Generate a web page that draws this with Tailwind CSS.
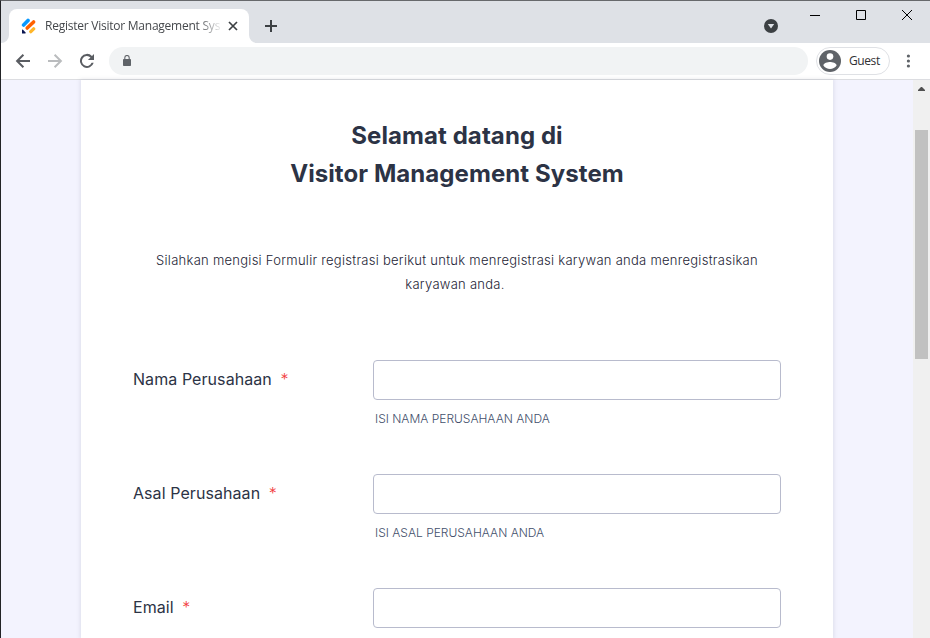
<!DOCTYPE html>
<html lang="id">
<head>
<meta charset="utf-8">
<title>Register Visitor Management System</title>
<script src="https://cdn.jsdelivr.net/npm/@tailwindcss/browser@4"></script>
</head>
<body class="h-[638px] w-[930px] overflow-hidden bg-white font-['Inter',sans-serif]">
<div class="flex h-full w-full flex-col border-t border-l border-t-[#67696c] border-l-[#222326]">
  <!-- Tab strip -->
  <header class="flex h-[42px] shrink-0 bg-[#dee1e6]">
    <div class="flex w-2 items-end">
      <svg class="h-2 w-2" viewBox="0 0 8 8"><path d="M8 0v8H0a8 8 0 0 0 8-8Z" fill="#fff"/></svg>
    </div>
    <div class="mt-2 flex h-[34px] w-[240px] items-center rounded-t-lg bg-white">
      <svg class="ml-3 h-4 w-4 shrink-0" viewBox="0 0 16 16" fill="none" stroke-linecap="round">
        <path d="M2.6 7 7 2.4" stroke="#0a99ff" stroke-width="3.6"/>
        <path d="M6.2 10 12.6 4" stroke="#ff6100" stroke-width="3.6"/>
        <path d="M9.8 13.6l2.8-2.7" stroke="#ffb629" stroke-width="3.4"/>
        <path d="M1 12.2v3.2h3.2c.6 0 .8-.5.4-.9L2 11.8c-.4-.4-1-.1-1 .4Z" fill="#0a1551"/>
      </svg>
      <div class="ml-2 w-[175px] overflow-hidden font-['Open_Sans',sans-serif] text-[12px] leading-4 tracking-[-0.24px] whitespace-nowrap text-[#45484c] [mask-image:linear-gradient(to_right,#000_152px,transparent_178px)]">Register Visitor Management System</div>
      <svg class="ml-2 h-[10px] w-[10px] shrink-0" viewBox="0 0 10 10" stroke="#3c4043" stroke-width="1.7"><path d="m1 1 8 8M9 1 1 9"/></svg>
    </div>
    <div class="flex w-2 items-end">
      <svg class="h-2 w-2" viewBox="0 0 8 8"><path d="M0 0v8h8a8 8 0 0 1-8-8Z" fill="#fff"/></svg>
    </div>
    <svg class="mt-[19px] ml-2 h-3 w-3" viewBox="0 0 12 12" stroke="#3c4043" stroke-width="2"><path d="M6 0v12M0 6h12"/></svg>
    <div class="ml-auto flex">
      <svg class="mt-[18px] h-[14px] w-[14px]" viewBox="0 0 14 14"><circle cx="7" cy="7" r="7" fill="#3c4043"/><path d="M3.8 5h6.4L7 9.5Z" fill="#dee1e6"/></svg>
      <svg class="mt-[14px] ml-8 h-[1px] w-[10px]" viewBox="0 0 10 1"><path d="M0 0h10v1H0Z"/></svg>
      <svg class="mt-[9px] ml-9 h-[10px] w-[10px]" viewBox="0 0 10 10" fill="none" stroke="#000"><path d="M.5.5h9v9h-9Z"/></svg>
      <svg class="mt-[9px] mr-[18px] ml-9 h-[10px] w-[10px]" viewBox="0 0 10 10" stroke="#000"><path d="m0 0 10 10M10 0 0 10"/></svg>
    </div>
  </header>
  <!-- Toolbar -->
  <div class="flex h-[37px] shrink-0 items-center border-b border-[#dcdde1] bg-white">
    <svg class="ml-[14px] h-4 w-4" viewBox="0 0 16 16" fill="none" stroke="#5a5d62" stroke-width="2"><path d="M15 8H2.5M8.4 1.7 2.1 8l6.3 6.3"/></svg>
    <svg class="ml-4 h-4 w-4" viewBox="0 0 16 16" fill="none" stroke="#babcbe" stroke-width="2"><path d="M1 8h12.5M7.6 1.7 13.9 8l-6.3 6.3"/></svg>
    <svg class="ml-4 h-4 w-4" viewBox="0 0 16 16"><path d="M13 3A7 7 0 1 0 14.7 9.8H12.6A5 5 0 1 1 11.5 4.5L8.9 7.1H15V1Z" fill="#5a5d62"/></svg>
    <div class="ml-[14px] flex h-7 w-[699px] items-center rounded-full bg-[#f1f3f4]">
      <svg class="mb-[1px] ml-[14px] h-[11px] w-2" viewBox="0 0 8 11"><rect y="4" width="8" height="7" rx=".8" fill="#5f6368"/><path d="M1.8 4.5V2.7a2.2 2.2 0 0 1 4.4 0v1.8" fill="none" stroke="#5f6368" stroke-width="1.1"/></svg>
    </div>
    <div class="ml-2 flex h-7 w-[74px] items-center rounded-full border border-[#dfe1e5]">
      <svg class="ml-[2px] h-[22px] w-[22px] shrink-0" viewBox="0 0 22 22"><circle cx="11" cy="11" r="11" fill="#5f6368"/><circle cx="11" cy="6.6" r="3.3" fill="#fff"/><path d="M4.4 15.4c0-2.2 4.4-3.4 6.6-3.4s6.6 1.2 6.6 3.4a7.9 7.9 0 0 1-13.2 0Z" fill="#fff"/></svg>
      <span class="ml-2 font-['Open_Sans',sans-serif] text-[12px] leading-4 tracking-[-0.4px] text-[#303134]">Guest</span>
    </div>
    <svg class="ml-4 h-[14px] w-1" viewBox="0 0 4 14" fill="#5f6368"><circle cx="2.4" cy="2" r="1.6"/><circle cx="2.4" cy="7" r="1.6"/><circle cx="2.4" cy="12" r="1.6"/></svg>
  </div>
  <!-- Page -->
  <div class="flex min-h-0 flex-1 bg-[#f3f3fe]">
    <main class="ml-20 w-[752px] bg-white px-[52px] shadow-[0_0_4px_1px_rgba(84,95,111,0.13)]">
      <h1 class="pt-[37px] text-center text-[24px] leading-[38px] font-bold tracking-[0.08px] text-[#2c3345]">Selamat datang di<br>Visitor Management System</h1>
      <p class="mt-[55px] text-center text-[13px] leading-6 font-light tracking-[0.27px] text-[#1d2435]">Silahkan mengisi Formulir registrasi berikut untuk menregistrasi karywan anda menregistrasikan<br><span class="mr-1">karyawan anda.</span></p>
      <form class="mt-16 flex flex-col text-[#2c3345]">
        <div class="flex h-[114px]">
          <label class="w-60 pt-[9px] text-[16px] leading-5 tracking-[0.07px]" for="nama">Nama Perusahaan <span class="ml-1 font-light text-[#f23a3c]">*</span></label>
          <div class="w-[408px]">
            <input id="nama" class="block h-10 w-full rounded border border-[#b8bbcd] bg-white">
            <div class="mt-[11px] pl-[2px] text-[12px] leading-4 font-light text-[#434f6b]">ISI NAMA PERUSAHAAN ANDA</div>
          </div>
        </div>
        <div class="flex h-[114px]">
          <label class="w-60 pt-[9px] text-[16px] leading-5 tracking-[0.07px]" for="asal">Asal Perusahaan <span class="ml-1 font-light text-[#f23a3c]">*</span></label>
          <div class="w-[408px]">
            <input id="asal" class="block h-10 w-full rounded border border-[#b8bbcd] bg-white">
            <div class="mt-[11px] pl-[2px] text-[12px] leading-4 font-light text-[#434f6b]">ISI ASAL PERUSAHAAN ANDA</div>
          </div>
        </div>
        <div class="flex">
          <label class="w-60 pt-[9px] text-[16px] leading-5 tracking-[0.07px]" for="email">Email <span class="ml-1 font-light text-[#f23a3c]">*</span></label>
          <input id="email" class="block h-10 w-[408px] rounded border border-[#b8bbcd] bg-white">
        </div>
      </form>
    </main>
    <div class="ml-auto w-[17px] bg-[#f0f0f0] px-[2px]">
      <svg class="mt-[7px] ml-[3px] h-1 w-[7px]" viewBox="0 0 7 4"><path d="M3 0h1l3 3v1H0V3Z" fill="#505050"/></svg>
      <div class="mt-[39px] h-[229px] w-[13px] bg-[#c1c1c1]"></div>
    </div>
  </div>
</div>
</body>
</html>
